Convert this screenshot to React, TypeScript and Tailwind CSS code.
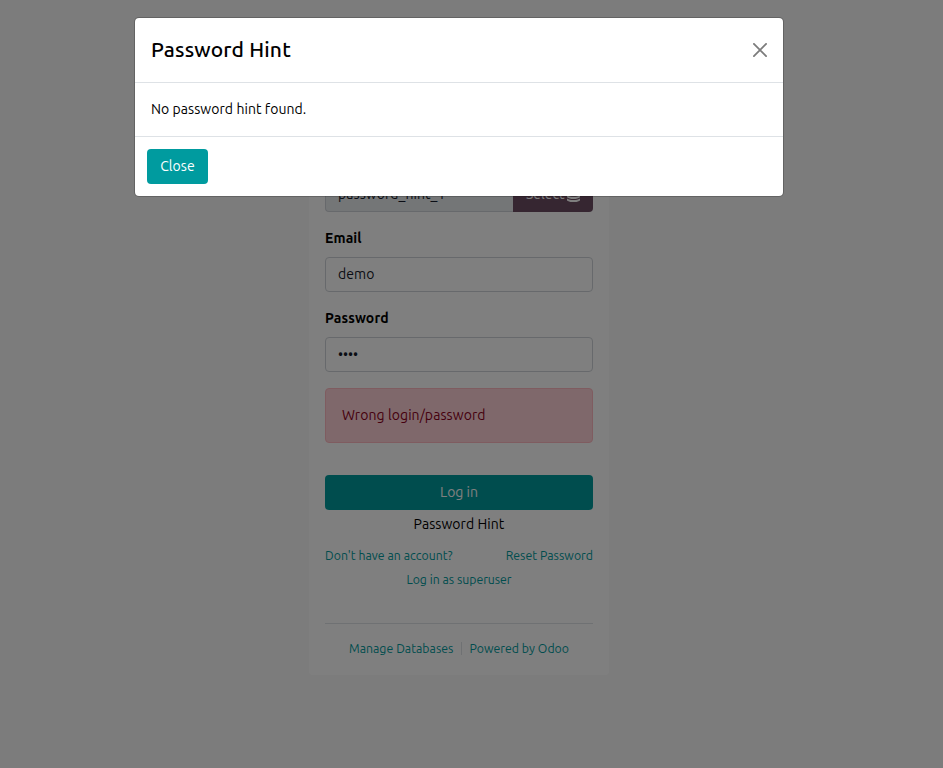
import React from 'react';

function Label({ children }: { children: React.ReactNode }) {
  return <label className="mb-2 block h-[21px] font-bold leading-[21px] tracking-[0.12px] text-black">{children}</label>;
}

function LoginCard() {
  return (
    <main className="mx-auto mt-12 h-[627px] w-[300px] rounded-[4px] bg-white px-4 pt-[100px]">
      <Label>Database</Label>
      <div className="flex h-[35px]">
        <div className="flex-1 rounded-l-[4px] border border-r-0 border-[#cfd3d8] bg-[#e9ecef] px-3 leading-[33px] tracking-[0.06px] text-[#151a2a]">password_hint_1</div>
        <div className="flex w-20 items-center rounded-r-[4px] bg-[#6c4d62] pl-[13px] text-white">
          <span>Select</span>
          <svg className="ml-[3px]" width="13" height="14" viewBox="0 0 12 14" preserveAspectRatio="none" fill="currentColor">
            <ellipse cx="6" cy="2.2" rx="6" ry="2.2" />
            <path d="M0 4c3 2 9 2 12 0v2c-2 2.4-10 2.4-12 0ZM0 7.2c3 2 9 2 12 0v2c-2 2.4-10 2.4-12 0ZM0 10.4c3 2 9 2 12 0v2c-2 2.2-10 2.2-12 0Z" />
          </svg>
        </div>
      </div>
      <div className="mt-4">
        <Label>Email</Label>
        <div className="h-[35px] rounded-[4px] border border-[#cfd3d8] px-3 leading-[33px] tracking-[0.1px] text-[#151a2a]">demo</div>
      </div>
      <div className="mt-4">
        <Label>Password</Label>
        <div className="h-[35px] rounded-[4px] border border-[#cfd3d8] px-3 leading-[33px] text-[#151a2a]">••••</div>
      </div>
      <div className="mt-4 h-[55px] rounded-[4px] border border-[#ffb8c0] bg-[#ffd0d6] px-4 leading-[53px] tracking-[0.08px] text-[#8b0020]">Wrong login/password</div>
      <div className="mt-8 h-[35px] rounded-[4px] bg-[#009b9d] text-center leading-[35px] text-white">Log in</div>
      <div className="mt-1 h-[21px] text-center leading-[21px] tracking-[0.06px] text-black">Password Hint</div>
      <div className="mt-3 flex h-[18px] justify-between text-[12.25px] leading-[18px] tracking-[0.05px] text-[#009a9c]">
        <a>Don't have an account?</a>
        <a>Reset Password</a>
      </div>
      <div className="mt-1.5 h-[18px] text-center text-[12.25px] leading-[18px] text-[#009a9c]">Log in as superuser</div>
      <div className="mt-[34px] flex justify-center border-t border-[#dee2e6] pt-[15px] text-[12.25px] leading-[18px] tracking-[0.05px] text-[#009a9c]">
        <a className="mt-px pr-2">Manage Databases</a>
        <span className="mt-[3px] h-[13px] w-px bg-[#dee2e6]" />
        <a className="mt-px pl-[7px]">Powered by Odoo</a>
      </div>
    </main>
  );
}

function HintDialog() {
  return (
    <section role="dialog" className="absolute left-[134px] top-[17px] w-[650px] rounded-[5px] border border-black/20 bg-white bg-clip-padding">
      <header className="flex h-[65px] items-center justify-between border-b border-[#dee2e6] px-4">
        <h4 className="-mt-0.5 text-[21px] font-medium leading-6 tracking-[0.16px] text-black">Password Hint</h4>
        <svg className="text-[#7c7c7c]" width="14" height="14" viewBox="0 0 14 14" fill="none" stroke="currentColor" strokeWidth="1.8" strokeLinecap="round">
          <path d="M.9.9l12.2 12.2M13.1.9L.9 13.1" />
        </svg>
      </header>
      <div className="h-[53px] px-4 leading-[52px] tracking-[0.06px] text-black">No password hint found.</div>
      <footer className="border-t border-[#dee2e6] p-3">
        <button className="block h-[35px] w-[61px] rounded-[4px] bg-[#009b9f] leading-[35px] tracking-[0.1px] text-white">Close</button>
      </footer>
    </section>
  );
}

export default function App() {
  return (
    <div className="relative h-[768px] overflow-hidden bg-[#f8f8f8] font-['Ubuntu','Noto_Sans',sans-serif] text-[14px]">
      <div className="w-[918px]"><LoginCard /></div>
      <div className="absolute inset-0 bg-black/50" />
      <HintDialog />
    </div>
  );
}
